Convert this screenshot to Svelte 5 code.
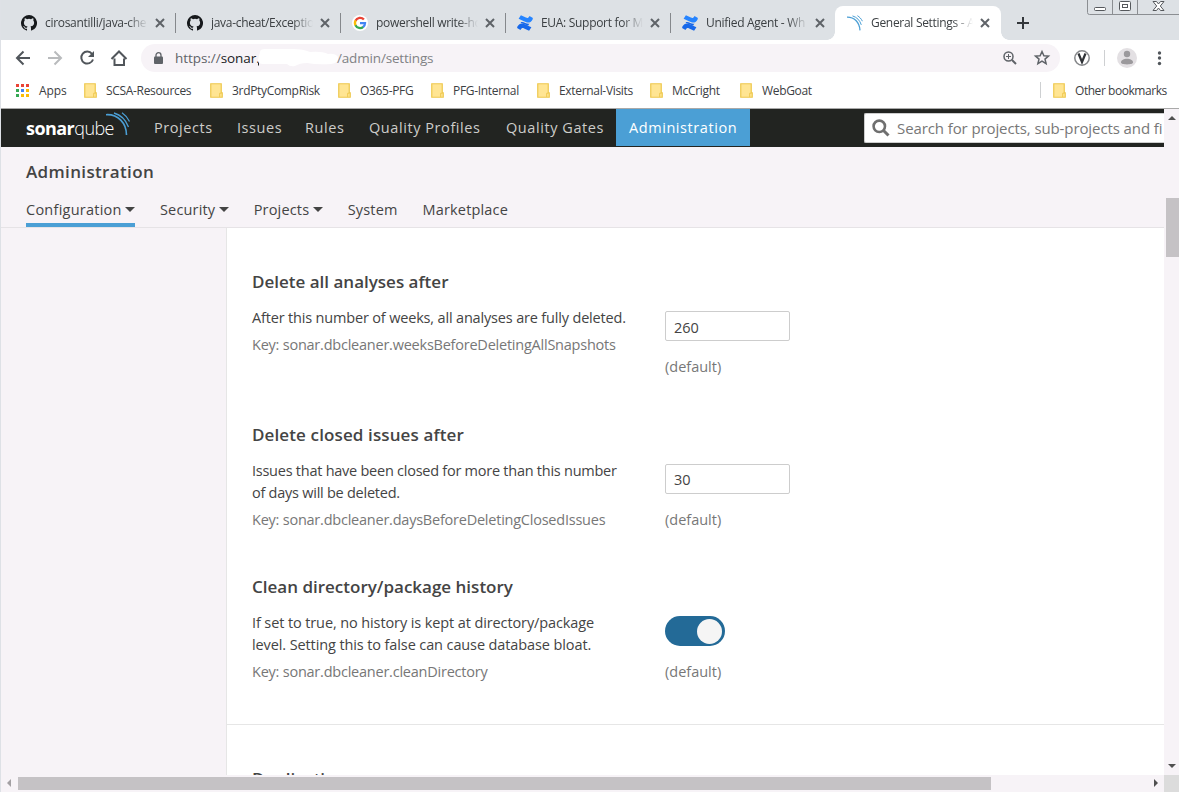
<script>
  const tabs = [
    { icon: 'github', title: 'cirosantilli/java-che' },
    { icon: 'github', title: 'java-cheat/Exceptio' },
    { icon: 'google', title: 'powershell write-ho' },
    { icon: 'confluence', title: 'EUA: Support for M' },
    { icon: 'confluence', title: 'Unified Agent - Wh' },
    { icon: 'sonar', title: 'General Settings - A', active: true },
  ];
  const bookmarks = [
    { name: 'SCSA-Resources', width: 126 },
    { name: '3rdPtyCompRisk', width: 128 },
    { name: 'O365-PFG', width: 93 },
    { name: 'PFG-Internal', width: 106 },
    { name: 'External-Visits', width: 113 },
    { name: 'McCright', width: 90 },
    { name: 'WebGoat', width: 80 },
  ];
  const appColors = ['#ea4335', '#ea4335', '#ea4335', '#34a853', '#4285f4', '#fbbc05', '#34a853', '#fbbc05', '#fbbc05'];
  const nav = ['Projects', 'Issues', 'Rules', 'Quality Profiles', 'Quality Gates', 'Administration'];
  const subnav = [
    { name: 'Configuration', menu: true, active: true },
    { name: 'Security', menu: true },
    { name: 'Projects', menu: true },
    { name: 'System' },
    { name: 'Marketplace' },
  ];
  const settings = [
    { title: 'Delete all analyses after', lines: ['After this number of weeks, all analyses are fully deleted.'], key: 'sonar.dbcleaner.weeksBeforeDeletingAllSnapshots', value: '260' },
    { title: 'Delete closed issues after', lines: ['Issues that have been closed for more than this number', 'of days will be deleted.'], key: 'sonar.dbcleaner.daysBeforeDeletingClosedIssues', value: '30' },
    { title: 'Clean directory/package history', lines: ['If set to true, no history is kept at directory/package', 'level. Setting this to false can cause database bloat.'], key: 'sonar.dbcleaner.cleanDirectory', toggle: true },
  ];
</script>

{#snippet folder()}
  <svg class="folder" width="13" height="15" viewBox="0 0 13 15">
    <path d="M.75.75h10.5v9h1v4.5H.75z" fill="#ffe593" stroke="#eec84e" stroke-width="1.2" />
    <path d="M9.7 14V10.2h1.8" fill="none" stroke="#eec84e" />
  </svg>
{/snippet}

{#snippet favicon(kind)}
  <svg class="favicon" width="16" height="16" viewBox="0 0 16 16">
    {#if kind === 'github'}
      <path fill="#16191c" d="M8 0a8 8 0 0 0-2.53 15.59c.4.07.55-.17.55-.38v-1.49c-2.23.48-2.7-.95-2.7-.95-.36-.92-.89-1.17-.89-1.17-.73-.5.05-.49.05-.49.81.06 1.24.83 1.24.83.71 1.23 1.87.87 2.33.67.07-.52.28-.87.5-1.07-1.77-.2-3.64-.89-3.64-3.95 0-.88.31-1.59.82-2.15-.08-.2-.36-1.02.08-2.12 0 0 .67-.21 2.2.82a7.6 7.6 0 0 1 4 0c1.53-1.04 2.2-.82 2.2-.82.44 1.1.16 1.92.08 2.12.51.56.82 1.27.82 2.15 0 3.07-1.87 3.75-3.65 3.95.29.25.54.73.54 1.48v2.2c0 .21.15.46.55.38A8 8 0 0 0 8 0z" />
    {:else if kind === 'google'}
      <circle cx="8" cy="8" r="8" fill="#fff" />
      <g fill="none" stroke-width="2.3">
        <path d="M11.9 4.6A5 5 0 0 0 3.5 5.8" stroke="#ea4335" />
        <path d="M3.7 5.4a5 5 0 0 0 0 5.2" stroke="#fbbc05" />
        <path d="M3.5 10.2a5 5 0 0 0 7.8 1.6" stroke="#34a853" />
        <path d="M11.1 12A5 5 0 0 0 13 8.2H8" stroke="#4285f4" />
      </g>
    {:else if kind === 'confluence'}
      <path d="M.4 11.6C2.8 7.7 5 7.8 9 9.8l5.4 2.4-2.3 3.6-5-2.4c-1.7-.8-2.3-.7-3.6 1.6L.1 13z" fill="#1768ea" />
      <path d="M15.6 4.4C13.2 8.3 11 8.2 7 6.2L1.6 3.8 3.9.2l5 2.4c1.7.8 2.3.7 3.6-1.6L15.9 3z" fill="#2684ff" />
      <path d="M3.500 7.500C6 5.600 10 9.800 12.500 8.500L11 10.700 5 8.300z" fill="#1768ea" />
    {:else}
      <g fill="none" stroke="#4b9fd5">
        <path d="M0 2.2c7-.2 12.5 4.8 13 13.2" stroke-width="1.3" />
        <path d="M5.5.9c4.2 1.2 7.5 4.5 8.8 9" /><path d="M10.4.7c2.2 1.3 3.8 3 5 5.5" />
      </g>
    {/if}
  </svg>
{/snippet}

<div class="window">
  <header class="strip">
    {#each tabs as tab}
      <div class="tab" class:active={tab.active}>
        {@render favicon(tab.icon)}
        <span class="tabtitle">{tab.title}</span>
        <svg width="10" height="10" viewBox="0 0 10 10"><path d="M1 1l8 8M9 1L1 9" stroke="#5f6368" stroke-width="2" /></svg>
      </div>
    {/each}
    <svg class="plus" width="12" height="12" viewBox="0 0 12 12"><path d="M6 0v12M0 6h12" stroke="#33373b" stroke-width="2" /></svg>
    <svg class="controls" width="92" height="15" viewBox="0 0 92 15">
      <path d="M.5 0v12.5q0 2 2 2H92M25.500 0v14M50.500 0v14" fill="none" stroke="#8b8e92" />
      <g fill="#fff" stroke="#55585c">
        <rect x="7.500" y="7.500" width="11" height="3" rx="1" />
        <rect x="32.500" y="1.500" width="11" height="9" rx="1" /><rect x="35.500" y="4.500" width="5" height="3" />
        <path d="M66 1.500h3.500l2 2.500 2-2.500H77L73.300 6l3.700 4.500h-3.500l-2-2.500-2 2.500H66L69.700 6z" />
      </g>
    </svg>
  </header>

  <div class="toolbar">
    <svg width="120" height="36" viewBox="0 0 120 36" fill="none" stroke="#51565b" stroke-width="2">
      <path d="M29 18H16.500M22.500 11.500L16 18l6.500 6.500" />
      <path d="M47 18h12.500M53.500 11.500L60 18l-6.500 6.500" stroke="#b9bbbd" />
      <path d="M91 13.800A6 6 0 1 0 92 19.500" /><path d="M93 11v6h-6z" fill="#51565b" stroke="none" />
      <path d="M113.500 18.500v6.500h9.500v-6.500M110.500 19l7.500-7.500 7.500 7.500" />
    </svg>
    <div class="omnibox">
      <svg width="9" height="12" viewBox="0 0 9 12"><path d="M2 5V3.200a2.500 2.500 0 0 1 5 0V5" fill="none" stroke="#5f6368" stroke-width="1.300" /><rect y="4.500" width="9" height="7.500" rx="1" fill="#5f6368" /></svg>
      <span class="url"><span>https://</span><b>sonar.</b></span>
      <svg class="mask" width="82" height="20" viewBox="0 0 82 20"><path d="M3 4Q3 1 8 1H36q10 0 17 3 12-1 18 2 7-1 10 3 1 6-7 7-14 1-24-1-7 0-12 3-5 1-8-2H6Q1 16 1 12z" fill="#fff" /><path d="M1.500 15v2.500" stroke="#202124" /></svg>
      <span class="path">/admin/settings</span>
      <svg class="tools" width="52" height="20" viewBox="0 0 52 20" fill="none" stroke="#5f6368">
        <g transform="translate(-1)"><circle cx="8.500" cy="8.500" r="4.500" stroke-width="1.500" /><path d="M12 12l4 4" stroke-width="2" /><path d="M8.500 6v5M6 8.500h5" /></g>
        <path d="M41 3.500l1.900 4.200 4.600.4-3.500 3 1.100 4.500-4.100-2.400-4.100 2.400 1.100-4.500-3.500-3 4.600-.4z" stroke-width="1.500" />
      </svg>
    </div>
    <svg class="right" width="106" height="24" viewBox="0 0 106 24">
      <circle cx="9" cy="12" r="7.200" fill="#fff" stroke="#85878a" stroke-width="1.500" />
      <path d="M5.500 7.500L9 16l3.500-8.500" fill="none" stroke="#303337" stroke-width="2.200" />
      <path d="M31.500 4v16" stroke="#ced0d2" />
      <circle cx="54" cy="12" r="10" fill="#e3e0e3" /><circle cx="54" cy="8" r="3.200" fill="#9b999c" /><path d="M48 16.500c0-5 12-5 12 0 0 2.500-12 2.500-12 0z" fill="#9b999c" />
      <g fill="#51565b"><circle cx="86.500" cy="7" r="1.700" /><circle cx="86.500" cy="12" r="1.700" /><circle cx="86.500" cy="17.500" r="1.700" /></g>
    </svg>
  </div>

  <div class="bookmarks">
    <div class="apps">
      <div class="dots">{#each appColors as c}<i style:background={c}></i>{/each}</div>
      <span>Apps</span>
    </div>
    {#each bookmarks as b}
      <div class="mark" style:width="{b.width}px">{@render folder()}<span>{b.name}</span></div>
    {/each}
    <div class="mark other">{@render folder()}<span>Other bookmarks</span></div>
  </div>

  <div class="viewport">
    <main>
      <nav>
        <div class="logo"><b>sonar</b><span>qube</span>
          <svg width="25" height="24" viewBox="0 0 25 24" fill="none" stroke="#4b9fd5">
            <path d="M0 2.700C12 2 20.500 11 20.500 23" stroke-width="1.600" />
            <path d="M8 1c6.500 1.800 12 7.500 14.500 14" stroke-width="1.300" /><path d="M16 .8c3 2 5.500 4.700 7.500 8.700" stroke-width="1.200" />
          </svg>
        </div>
        {#each nav as item}<a class:current={item === 'Administration'}>{item}</a>{/each}
        <div class="search">
          <svg width="18" height="18" viewBox="0 0 18 18" fill="none" stroke="#6f6f6f"><circle cx="7.300" cy="7.300" r="5.700" stroke-width="2.600" /><path d="M11.500 11.500l5 5" stroke-width="3" /></svg>
          <span>Search for projects, sub-projects and fi</span>
        </div>
      </nav>
      <section class="context">
        <h1>Administration</h1>
        <div class="subnav">
          {#each subnav as s}
            <a class:current={s.active}>{s.name}{#if s.menu}<i class="caret"></i>{/if}</a>
          {/each}
        </div>
      </section>
      <div class="body">
        <aside></aside>
        <div class="panel">
          <div class="group">
            {#each settings as s}
              <div class="setting">
                <div class="info">
                  <h3>{s.title}</h3>
                  {#each s.lines as line}<p>{line}</p>{/each}
                  <p class="key">Key: {s.key}</p>
                </div>
                <div class="value">
                  {#if s.toggle}<div class="toggle"><i></i></div>{:else}<div class="input">{s.value}</div>{/if}
                  <p class="default">(default)</p>
                </div>
              </div>
            {/each}
          </div>
          <div class="group next"><h3>Duplications</h3></div>
        </div>
      </div>
    </main>
    <div class="vbar">
      <i class="up"></i><div class="vthumb"></div><i class="down"></i>
    </div>
    <div class="hbar"><i class="left"></i><div class="hthumb"></div><i class="rightarrow"></i></div>
    <div class="corner"></div>
  </div>
</div>

<style>
  :global(body) { margin: 0; overflow: hidden; }
  * { box-sizing: border-box; }
  .window { width: 1179px; height: 792px; overflow: hidden; display: flex; flex-direction: column; background: #fff; border-left: 1px solid #dee1e6; font-family: "Open Sans", "Noto Sans", sans-serif; color: #444; }
  svg { display: block; flex: none; }
  p, h1, h3 { margin: 0; white-space: nowrap; }

  .strip { height: 40px; flex: none; display: flex; background: #dde1e5; position: relative; }
  .tab { width: 165px; height: 34px; flex: none; margin-top: 6px; padding-left: 20px; display: flex; align-items: center; position: relative; }
  .tab:first-child { width: 166px; }
  .tab:not(.active):not(:nth-child(5))::after { content: ""; position: absolute; right: -9px; top: 7px; width: 1px; height: 20px; background: #85888c; }
  .tab.active { width: 166px; margin-left: 8px; padding-left: 12px; background: #fff; border-radius: 8px 8px 0 0; }
  .tab.active::before, .tab.active::after { content: ""; position: absolute; bottom: 0; width: 8px; height: 8px; }
  .tab.active::before { left: -8px; background: radial-gradient(circle at 0 0, transparent 7.5px, #fff 8px); }
  .tab.active::after { right: -8px; background: radial-gradient(circle at 100% 0, transparent 7.5px, #fff 8px); }
  .tabtitle { width: 102px; flex: none; margin: 0 7px 0 8px; overflow: hidden; white-space: nowrap; font-size: 12px; line-height: 18px; letter-spacing: -.3px; color: #3c4043; -webkit-mask-image: linear-gradient(90deg, #000 80%, transparent); mask-image: linear-gradient(90deg, #000 80%, transparent); }
  .tab:first-child .tabtitle { width: 103px; }
  .plus { margin: 17px 0 0 16px; }
  .controls { position: absolute; right: 0; top: 0; }

  .toolbar { height: 36px; flex: none; display: flex; align-items: center; }
  .toolbar > svg:first-child { overflow: visible; }
  .omnibox { width: 919px; flex: none; height: 28px; margin-left: 20px; padding-left: 13px; border-radius: 14px; background: #f7f3f7; display: flex; align-items: center; font-size: 13.500px; color: #5f6368; }
  .url { margin-left: 12px; width: 82px; white-space: nowrap; letter-spacing: -.05px; }
  .url b { font-weight: 400; color: #202124; }
  .mask { margin-top: -1px; }
  .path { color: #808285; margin-left: -2px; letter-spacing: -.17px; }
  .tools { margin-left: auto; margin-right: 7px; }
  .right { margin-left: 13px; }

  .bookmarks { height: 32px; flex: none; display: flex; align-items: center; padding-bottom: 4px; font-size: 12px; color: #3c4043; white-space: nowrap; letter-spacing: -.32px; }
  .apps { width: 83px; flex: none; padding-left: 15px; display: flex; align-items: center; gap: 10px; letter-spacing: -.1px; }
  .dots { display: grid; grid-template-columns: repeat(3, 3px); gap: 2px; }
  .dots i { width: 3px; height: 3px; }
  .mark { display: flex; flex: none; align-items: center; gap: 9px; }
  .other { margin-left: auto; padding-left: 12px; width: 139px; height: 16px; border-left: 1px solid #ced0d2; letter-spacing: -.45px; }

  .viewport { flex: 1; min-height: 0; display: grid; grid-template: 666px 17px / 1163px 15px; border-top: 1px solid #a9a9a9; }
  main { background: #f7f3f7; overflow: hidden; }
  nav { height: 38px; display: flex; background: #222421; font-size: 14.500px; letter-spacing: .57px; color: #cdcdca; overflow: hidden; }
  .logo { width: 140px; padding-left: 25px; display: flex; font-size: 18px; line-height: 38px; letter-spacing: -.55px; color: #fff; flex: none; }
  .logo b { font-weight: 700; }
  .logo span { font-weight: 300; }
  .logo svg { margin: 3px 0 0 -8px; }
  a { white-space: nowrap; flex: none; }
  nav a { height: 37px; line-height: 37px; text-align: left; padding-left: 13px; width: 83px; }
  nav a:nth-of-type(2) { width: 68px; }
  nav a:nth-of-type(3) { width: 64px; }
  nav a:nth-of-type(4) { width: 137px; }
  nav a:nth-of-type(5) { width: 123px; }
  nav a.current { width: 134px; background: #4b9fd5; color: #fff; }
  .search { width: 300px; flex: none; height: 30px; margin: 4px 0 0 114px; padding-left: 7px; display: flex; align-items: center; border: 1px solid #cdcdcd; border-right: 0; border-radius: 2px 0 0 2px; background: #fff; color: #777; font-size: 15px; letter-spacing: -.1px; white-space: nowrap; }
  .search span { margin-left: 7px; }
  .context { height: 81px; padding: 13px 25px 0; border-bottom: 1px solid #e6e3e6; }
  h1 { font-size: 17px; line-height: 24px; font-weight: 600; letter-spacing: .35px; color: #444; }
  .subnav { display: flex; gap: 25px; margin-top: 14px; font-size: 14.500px; letter-spacing: .16px; }
  .subnav a { height: 29px; line-height: 23px; display: flex; }
  .subnav a.current { width: 109px; letter-spacing: .25px; border-bottom: 4px solid #4b9fd5; }
  .caret { border: 5px solid transparent; border-top-color: #444; border-bottom: 0; margin: 9px 0 0 3.500px; }
  .body { display: flex; height: 547px; }
  aside { width: 226px; border-right: 1px solid #e6e6e6; flex: none; }
  .panel { flex: 1; background: #fff; }
  .group { height: 497px; padding: 42px 0 0 25px; border-bottom: 1px solid #e6e6e6; }
  .setting { display: flex; height: 153px; }
  .setting:nth-child(2) { height: 152px; }
  .info { width: 413px; }
  h3 { font-size: 17px; line-height: 24px; font-weight: 600; color: #444; }
  .info h3 { margin-bottom: 13px; }
  .setting:nth-child(2) h3 { letter-spacing: .12px; }
  .info p { font-size: 14.500px; line-height: 22px; letter-spacing: -.17px; }
  .setting:nth-child(2) p { letter-spacing: -.25px; }
  .setting:nth-child(3) p { letter-spacing: -.11px; }
  .info .key.key { margin-top: 5px; letter-spacing: -.23px; }
  .key, .default { color: #777; }
  .input { width: 125px; height: 30px; margin-top: 41px; padding-left: 8px; border: 1px solid #cdcdcd; border-radius: 2px; font-size: 14.500px; line-height: 30px; }
  .setting:first-child .input { line-height: 31px; }
  .value .default.default { font-size: 14.500px; line-height: 22px; margin-top: 15px; letter-spacing: 0; }
  .toggle { width: 60px; height: 30px; margin-top: 41px; padding: 3px; border-radius: 15px; background: #236a97; display: flex; justify-content: flex-end; }
  .toggle i { width: 25px; height: 25px; border-radius: 50%; background: #f5f5f5; }

  .vbar, .hbar { background: #f7f3f7; }
  .vbar { display: flex; flex-direction: column; padding-left: 2px; }
  .vthumb { height: 59px; margin-top: 78px; background: #c5c2c5; }
  .vbar i { border: 4px solid transparent; width: 8px; margin-left: 2px; }
  .up { border-top: 0 !important; border-bottom-color: #505050 !important; margin-top: 7px; }
  .down { border-bottom: 0 !important; border-top-color: #505050 !important; margin-top: auto; margin-bottom: 7px; }
  .hbar { display: flex; height: 17px; }
  .hthumb { width: 973px; height: 13px; margin: 2px 0 0 7px; background: #c5c2c5; }
  .hbar i { border: 4px solid transparent; height: 8px; margin-top: 4px; }
  .left { border-left: 0 !important; border-right-color: #a3a0a3 !important; margin-left: 6px; }
  .rightarrow { border-right: 0 !important; border-left-color: #505050 !important; margin-left: auto; margin-right: 6px; }
  .corner { background: #dcdcdc; }
</style>
